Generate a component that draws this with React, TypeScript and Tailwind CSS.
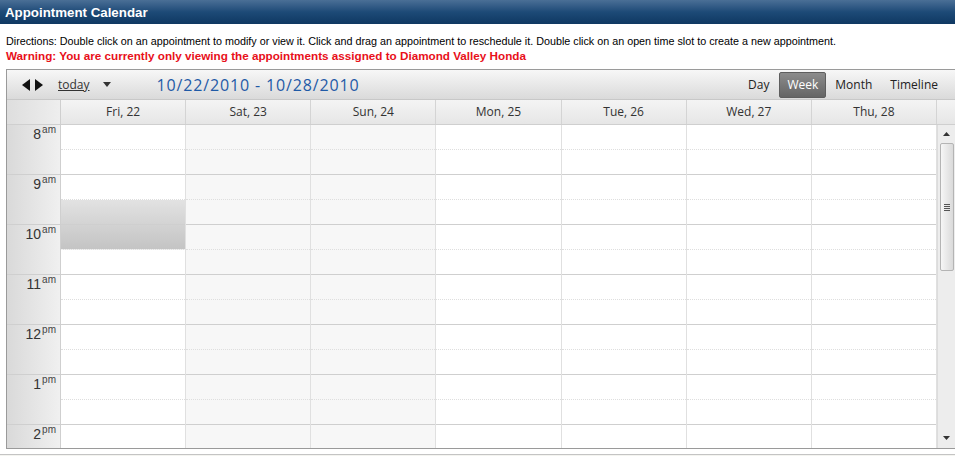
const days = ["Fri, 22", "Sat, 23", "Sun, 24", "Mon, 25", "Tue, 26", "Wed, 27", "Thu, 28"];
const hours: [string, string][] = [
  ["8", "am"],
  ["9", "am"],
  ["10", "am"],
  ["11", "am"],
  ["12", "pm"],
  ["1", "pm"],
  ["2", "pm"],
];

function Slot() {
  return (
    <div className="h-[50px] border-b border-[#cfcfcf]">
      <div className="h-[25px] border-b border-dotted border-[#dedede]" />
    </div>
  );
}

export default function App() {
  return (
    <div className="w-[955px] h-[456px] overflow-hidden bg-white font-['Liberation_Sans',Arial,sans-serif]">
      {/* title bar */}
      <div className="h-[24px] bg-gradient-to-b from-[#4a6f96] via-[#1d4a77] to-[#0f3862] px-[5px] pt-[3px] text-[13.3px] font-bold text-white">
        Appointment Calendar
      </div>

      <div className="px-[6px] pt-[10px] text-[10.78px] leading-[14px] text-black">
        Directions: Double click on an appointment to modify or view it. Click and drag an appointment to reschedule it. Double click on an open time slot to create a new appointment.
      </div>
      <div className="px-[6px] text-[11.7px] font-bold leading-[15px] text-[#e8101a]">
        Warning: You are currently only viewing the appointments assigned to Diamond Valley Honda
      </div>

      {/* calendar */}
      <div className="ml-[6px] mt-[6px] h-[380px] border-t border-l border-b border-[#9a9a9a] font-['Open_Sans','DejaVu_Sans',sans-serif]">
        {/* toolbar */}
        <div className="flex h-[30px] items-center bg-gradient-to-b from-[#f7f7f7] to-[#dadada] border-b border-[#c8c8c8]">
          <div className="ml-[15px] flex items-center gap-[5px]">
            <svg width="8" height="12" viewBox="0 0 8 12"><path d="M8 0 L0 6 L8 12 Z" fill="#111" /></svg>
            <svg width="8" height="12" viewBox="0 0 8 12"><path d="M0 0 L8 6 L0 12 Z" fill="#111" /></svg>
          </div>
          <span className="ml-[15px] text-[12px] text-[#333] underline">today</span>
          <svg className="ml-[13px]" width="8" height="5" viewBox="0 0 8 5"><path d="M0 0 H8 L4 5 Z" fill="#333" /></svg>
          <span className="ml-[46px] text-[16px] tracking-[0.85px] text-[#1f5aa6]">10/22/2010 - 10/28/2010</span>
          <div className="ml-auto mr-[17px] flex items-center text-[12px] text-[#222]">
            <span className="px-[5px]">Day</span>
            <span className="ml-[5px] rounded-[2px] border border-[#5e5e5e] bg-gradient-to-b from-[#8c8c8c] to-[#656565] px-[7px] py-[3px] text-white">Week</span>
            <span className="ml-[4px] px-[5px]">Month</span>
            <span className="ml-[8px] px-[5px] pr-0">Timeline</span>
          </div>
        </div>

        {/* header */}
        <div className="flex h-[25px] border-b border-[#cfcfcf] bg-gradient-to-b from-[#f4f4f4] to-[#e6e6e6] text-[12px] text-[#333]">
          <div className="w-[54px] shrink-0 border-r border-[#cfcfcf] bg-gradient-to-r from-[#dedede] to-[#eeeeee]" />
          <div className="grid flex-1 grid-cols-7">
            {days.map((d) => (
              <div key={d} className="flex items-center justify-center border-r border-[#d4d4d4]">
                {d}
              </div>
            ))}
          </div>
          <div className="w-[18px] shrink-0" />
        </div>

        {/* body */}
        <div className="flex h-[323px] overflow-hidden">
          <div className="w-[54px] shrink-0 border-r border-[#cfcfcf] bg-gradient-to-r from-[#d9d9d9] to-[#f0f0f0] font-['Liberation_Sans',Arial,sans-serif]">
            {hours.map(([h, s]) => (
              <div key={h} className="h-[50px] border-b border-[#cfcfcf] pr-[4px] pt-px text-right leading-none">
                <span className="text-[14px] text-[#333]">{h}</span>
                <sup className="ml-[1px] top-[-0.6em] text-[10px] text-[#444]">{s}</sup>
              </div>
            ))}
          </div>
          <div className="grid flex-1 grid-cols-7">
            {days.map((d, di) => (
              <div
                key={d}
                className={`relative border-r border-[#e0e0e0] ${di === 1 || di === 2 ? "bg-[#f7f7f7]" : "bg-white"}`}
              >
                {hours.map((h, i) => (
                  <Slot key={i} />
                ))}
                {di === 0 && (
                  <div className="absolute left-0 right-0 top-[75px] h-[50px] border-b border-dotted border-[#f2f2f2] bg-gradient-to-b from-[#e2e2e2] to-[#c4c4c4]">
                    <div className="mt-[24px] border-b border-[#cfcfcf]" />
                  </div>
                )}
              </div>
            ))}
          </div>
          {/* scrollbar */}
          <div className="flex w-[18px] shrink-0 flex-col items-center border-l border-[#dcdcdc] bg-[#ededed]">
            <svg className="mt-[7px]" width="7" height="4" viewBox="0 0 7 4"><path d="M0 4 L3.5 0 L7 4 Z" fill="#333" /></svg>
            <div className="mt-[7px] flex h-[128px] w-[14px] items-center justify-center rounded-[2px] border border-[#b4b4b4] bg-gradient-to-r from-[#f6f6f6] to-[#dadada]">
              <div className="flex flex-col gap-[1px]">
                <div className="h-px w-[6px] bg-[#555]" />
                <div className="h-px w-[6px] bg-[#555]" />
                <div className="h-px w-[6px] bg-[#555]" />
                <div className="h-px w-[6px] bg-[#555]" />
              </div>
            </div>
            <svg className="mt-auto mb-[8px]" width="7" height="4" viewBox="0 0 7 4"><path d="M0 0 L7 0 L3.5 4 Z" fill="#333" /></svg>
          </div>
        </div>
      </div>
      <div className="mt-[5px] border-t border-[#c4c4c4] h-[3px] bg-[#f4f4f0]" />
    </div>
  );
}
